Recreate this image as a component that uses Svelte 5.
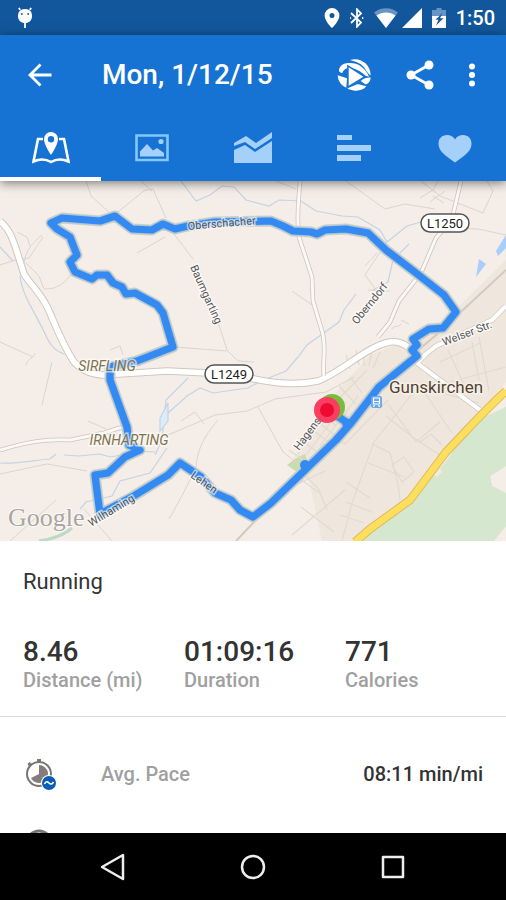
<script>
  let active = $state('Map');

  const tabs = ['Map', 'Photos', 'Charts', 'Laps', 'Heart rate'];

  const stats = [
    { value: '8.46', label: 'Distance (mi)' },
    { value: '01:09:16', label: 'Duration' },
    { value: '771', label: 'Calories' }
  ];

  const route =
    'M346 424 L351 423 L336 440 L305 470 L271 503 L253 517 L240 510 L231 500 L215 493 L201 477 L180 463 L168 475 L132 497 L100 514 L95 475 L108 473 L125 457 L140 450 L129 445 L127 427 L110 380 L110 367 L137 361 L173 347 L163 313 L157 305 L135 293 L126 294 L122 287 L113 283 L107 275 L97 275 L92 279 L75 272 L70 262 L77 255 L70 237 L57 229 L51 223 L62 218 L100 221 L115 216 L132 229 L152 230 L163 224 L175 229 L188 226 L215 222 L271 221 L283 226 L293 231 L311 232 L317 234 L325 230 L346 229 L368 233 L386 250 L416 273 L444 295 L456 312 L443 328 L429 329 L413 339 L417 345 L412 350 L417 356 L379 387 L351 423 L346 422 L330 411';
</script>

<div class="screen">
  <div class="status">
    <svg class="bug" width="16" height="22" viewBox="0 0 16 22" aria-hidden="true">
      <path d="M3 3 2 .8M13 3 14 .8M8 15v6" stroke="#fff" stroke-width="1.8" fill="none" />
      <path d="M8 2c5 0 7 3 7 7 0 4.500-3 7-7 7s-7-2.500-7-7c0-4 2-7 7-7z" fill="#fff" />
      <circle cx="4.800" cy="7" r=".9" fill="#12579b" /><circle cx="11.200" cy="7" r=".9" fill="#12579b" />
    </svg>
    <div class="system">
      <svg width="16" height="20" viewBox="0 0 16 20" aria-hidden="true"><path fill="#fff" fill-rule="evenodd" d="M8 0a7.400 7.400 0 0 1 7.400 7.400C15.400 13 8 20 8 20S.6 13 .6 7.400A7.400 7.400 0 0 1 8 0zm0 5a2.500 2.500 0 1 0 0 5 2.500 2.500 0 0 0 0-5z" /></svg>
      <svg width="14" height="20" viewBox="0 0 14 20" aria-hidden="true"><path fill="none" stroke="#fff" stroke-width="1.800" d="m1 5 10 9.500-4 4.200V1.300l4 4.200L1 15" /><path fill="#fff" d="m0 8.700 1.500 1.300L0 11.300zm12 0 2 1.300-2 1.300z" /></svg>
      <svg width="24" height="20" viewBox="0 0 24 20" aria-hidden="true"><path fill="#6794c0" d="M0 4.500C7-1.200 17-1.200 24 4.500L12 20z" /><path fill="#fff" d="M2.500 7.500C8 3.500 16 3.500 21.500 7.500L12 20z" /></svg>
      <svg width="20" height="20" viewBox="0 0 20 20" aria-hidden="true"><path fill="#fff" d="M20 0v20H0z" /></svg>
      <svg class="battery" width="14" height="20" viewBox="0 0 14 20" aria-hidden="true"><path fill="#6794c0" d="M4.500 0h5v2H14v8H0V2h4.500z" /><path fill="#fff" d="M0 8h14v12H0z" /><path fill="#12579b" d="M10.500 5 3.500 11.800h3L4 17.500l7.500-7.200H8z" /></svg>
      <span>1:50</span>
    </div>
  </div>

  <header>
    <div class="bar">
      <button aria-label="Back">
        <svg width="24" height="24" viewBox="0 0 24 24"><path d="M23.500 12H2.500M12.500 1.500 2 12l10.500 10.500" fill="none" stroke="#fff" stroke-width="2.800" /></svg>
      </button>
      <h1>Mon, 1/12/15</h1>
      <div class="actions">
        <button aria-label="Play track">
          <svg width="36" height="34" viewBox="250 173 108 102" fill="#fff">
            <path d="M292 179C325 170 354 193 354 225 348 222 343 214 337 205 328 191 313 184 292 179z" />
            <path d="M262 201C267 188 290 185 310 190 330 197 343 213 349 229L338 226C326 213 306 203 288 203 277 204 271 211 269 218 258 217 256 210 262 201z" />
            <path d="M255 225 283 234 281 262C266 257 256 243 255 225z" />
            <path d="M324 242C334 233 346 231 354 232 353 243 346 251 338 252z" />
            <path d="M284 264 314 252C325 252 334 257 341 258 334 268 320 272 307 271 297 270 289 268 284 264z" />
            <path d="M288 201 332 229 288 256z" stroke="#1673d3" stroke-width="9" paint-order="stroke" />
          </svg>
        </button>
        <button aria-label="Share">
          <svg width="28" height="30" viewBox="0 0 28 30"><path d="M23 5 5 15l18 10" fill="none" stroke="#fff" stroke-width="2.800" /><g fill="#fff"><circle cx="23" cy="5" r="4.500" /><circle cx="5" cy="15" r="4.500" /><circle cx="23" cy="25" r="4.500" /></g></svg>
        </button>
        <button aria-label="More options">
          <svg width="8" height="24" viewBox="0 0 8 24" fill="#fff"><circle cx="4" cy="3.500" r="3" /><circle cx="4" cy="12" r="3" /><circle cx="4" cy="20.500" r="3" /></svg>
        </button>
      </div>
    </div>

    <nav class="tabs" aria-label="Activity views">
      {#each tabs as tab}
        <button class:active={active === tab} aria-label={tab} onclick={() => (active = tab)}>
          {#if tab === 'Map'}
            <svg width="38" height="32" viewBox="0 0 38 32"><path d="M11 7H6L1.500 29.500C7 27 14 27 19 30c5-3 12-3 17.500-.5L32 7h-5" fill="none" stroke="currentColor" stroke-width="2.600" /><path fill="currentColor" fill-rule="evenodd" d="M19 0a7 7 0 0 1 7 7c0 6-7 16-7 16S12 13 12 7a7 7 0 0 1 7-7zm0 4a3.200 3.200 0 1 0 0 6.400A3.200 3.200 0 0 0 19 4z" /></svg>
          {:else if tab === 'Photos'}
            <svg width="34" height="28" viewBox="0 0 34 28"><path d="M1.500 1.500h31v24.500h-31z" fill="none" stroke="#82c8f9" stroke-width="2.600" /><path fill="currentColor" d="M5 22.500v-5L12 10l6 6.500 4-2.500 7 5v3.500z" /><circle cx="26" cy="7.500" r="2.600" fill="currentColor" /></svg>
          {:else if tab === 'Charts'}
            <svg width="38" height="32" viewBox="0 0 38 32" fill="currentColor"><path d="M0 31V18l11-5 10 7L38 9v22z" /><path d="M0 14V11L12 4l10 7L38 0v6L21 17 11 10z" /></svg>
          {:else if tab === 'Laps'}
            <svg width="34" height="28" viewBox="0 0 34 28" fill="currentColor"><path d="M0 1h15v5H0zM0 11h34v6H0zM0 21h24v6H0z" /></svg>
          {:else}
            <svg width="34" height="29" viewBox="0 0 34 29" fill="currentColor"><path d="M17 28.500C6 20.500.5 17 .5 9.500.5 4.500 4 1 9 1c3.500 0 6.500 1.700 8 4.500C18.500 2.700 21.500 1 25 1c5 0 8.500 3.500 8.500 8.500 0 7.500-5.500 11-16.500 19z" /></svg>
          {/if}
        </button>
      {/each}
    </nav>
  </header>

  <main>
    <svg class="map" viewBox="0 181 506 360" role="img" aria-label="Route map around Gunskirchen">
      <rect y="181" width="506" height="360" fill="#f5ede7" />
      <path fill="#efe6dd" d="M506 260 440 325 404 342 370 355 340 388 316 420 292 462 309 480 322 541H354L422 490 506 382z" />
      <path fill="#d6e7cf" d="M506 407 482 418 462 438 444 464 412 497 382 524 362 541H494L506 526V512L494 541H362L382 524 412 497 444 464 462 438 482 418 506 407V466L490 476 492 486 506 493V526L494 541H362z" />
      <path fill="#d6e7cf" d="M506 407 482 418 462 438 444 464 412 497 382 524 362 541H494L506 526V493L492 486 490 476 506 466z" />
      <path fill="#f1ebe2" d="m434 475 6-7 2 4-5 5z" />
      <path fill="#cbdbb0" d="m287 465 8-6 10-5 3 9-11 9z" />
      <path fill="#a9cdfc" d="m479 259 7 5-10 13zM506 235l-10 16 2 5 8-8z" />

      <g fill="none" stroke="#c5d3e4" stroke-width="1.200">
        <path d="m181 181 15 20 14-6 12-9 12 1 12 13 23 6 10-6 22 1 15 10 26 5 16 1 22 13 7 12 20-16 21-6" />
        <path d="M20 276c2 20 17 39 27 62 5 10 10 14 17 16M0 247l13 14M0 463c17 1 35-3 50-4l6-5m8 1 15 1 20-2 12 3 28-6 16 1M80 509l6-7 26-6 8-15 30-8 17-25" />
        <path d="M168 413l19-17 13-8 13 5 35-5 13-7 25-10 12-14 9-12 32-23 5-12 12-16M373 290l15-8 5-22 16-16M155 455l7-15 4-40 22-22" />
        <path d="m160 418 8-15 0 18-8 10z" fill="#dcebf9" />
      </g>
      <path d="M39 541c15-2 25-6 33-13" fill="none" stroke="#bed9c9" stroke-width="3" />

      <g fill="none" stroke="#dcd5ce" stroke-width="1">
        <path d="m86 181 5 15 20 18m7-2 27-22 8-1 13 29m-26-38 12 11M174 234l19 25m25 63 9 28 11 11 16 1M175 347l52 4M0 265l12-4 17-3 14-21M25 277c-3-14-1-28 17-42M17 232l10 5 3 9M26 263l13 13 5 13c10 0 17-2 27-14M137 253l28-16M0 342l33 15m-7 8c2-7 9-8 9-12M52 362l-10 43M110 350l10-4 3 9M0 474l47-10 40 7M88 421l18 8M10 541l46-41m28 9 28 32" />
        <path d="m168 435 47-20 32-4 28-12 51-7 28-15M218 420c-15 17-21 31-22 48-9 17-14 29-27 51M258 407l25 45 14 11M181 421l14-9 9 12M292 291l20 14M276 181l20 8M346 181l39 28 20-5 30 5M421 181l19 15 43 17 10-22-6-10M429 222l21 6 28 1 28 6M420 198l13-8 5-9m-5 15 11 7m1-12-15 11" />
        <path d="m388 240-23 35 15 20m-15-29 12-13m-9 37 22 1M401 320l8 4m-8 0c-2 4-8 1-9 5" />
      </g>

      <g fill="none" stroke="#e3dacf" stroke-width="1.200">
        <path d="m350 377 12 16m-23-7 17 18m-26-9 18 20m-28-5 16 16m-28 1 21 15m-30-4 18 14m-28-2 18 13m-10 14 24 17M346 355l4 14m6-19 3 15m5-15v16m8-17-3 17m11-14-7 16" />
        <path d="M367 370 326 412l-28 42m48-52-40 53m52-59-38 50M316 420l29 24 43-44M342 541l10-38 22-61 38-48M388 404l28 38 24-20m-54-6 28 22M414 438l27 18 22-22M372 444l18 9 8 31 2 16M368 463l36 14M346 482l24 16m-24 4 26 10m-32 3 24 8M392 465l12-8 10 15-12 10zM419 443l12-9 11 11M425 393l27 40m-15-41 42 11M448 350l16 35m8-43 7 38M440 362l40-19M450 382l56-15M479 337l10 54" />
        <path d="m300 471 18 17 9 22m-38-22 36-17m-24 36 33 25m-42 3 53-45" />
      </g>

      <g fill="none" stroke-linejoin="round">
        <path stroke="#cfc8bf" stroke-width="7.500" d="M0 221c13 11 15 26 24 53 9 14 19 21 26 39 8 19 13 32 24 49 8 8 15 12 28 13l65-4 63 3c25 5 55 14 88 7 24-9 49-35 72-39 16-2 21 9 31 19" />
        <path stroke="#fff" stroke-width="5.500" d="M0 221c13 11 15 26 24 53 9 14 19 21 26 39 8 19 13 32 24 49 8 8 15 12 28 13l65-4 63 3c25 5 55 14 88 7 24-9 49-35 72-39 16-2 21 9 31 19" />
        <g stroke="#cbc4bc" stroke-width="4.500"><path d="M300 181c-1 18-4 35-1 56l13 40 1 24 9 30c5 16 0 32 2 45M461 181l-9 38-16 19-15 35-22 28-9 21-12 15" /><path d="M0 450c28-8 43-11 70-10l34-7 15-5 10-1" /></g>
        <g stroke="#fbf8f5" stroke-width="3"><path d="M300 181c-1 18-4 35-1 56l13 40 1 24 9 30c5 16 0 32 2 45M461 181l-9 38-16 19-15 35-22 28-9 21-12 15" /><path d="M0 450c28-8 43-11 70-10l34-7 15-5 10-1" /></g>
        <path d="M506 270 435 336 392 372 300 474 236 541" stroke="#d2cabf" stroke-width="2" />
        <path d="m506 306-14 14-56 26-10 8-9 9 63 47" stroke="#d5cdc3" stroke-width="5.500" />
        <path d="m506 306-14 14-56 26-10 8-9 9 63 47" stroke="#fff" stroke-width="4" />
        <path d="M506 391C485 410 470 427 446 452L410 500 370 529 355 542" stroke="#dfb956" stroke-width="8.500" />
        <path d="M506 391C485 410 470 427 446 452L410 500 370 529 355 542" stroke="#fddf5f" stroke-width="6.500" />
      </g>

      <g fill="none" stroke-linejoin="round" stroke-linecap="round">
        <path d={route} stroke="#cfd0c2" stroke-width="11" />
        <path d={route} stroke="#a9c6df" stroke-width="9" />
        <path d={route} stroke="#348af0" stroke-width="7.200" />
        <circle cx="305" cy="465" r="5" fill="#348af0" />
      </g>

      <g class="place" text-anchor="middle">
        <text x="107" y="371">SIRFLING</text>
        <text x="129" y="445">IRNHARTING</text>
      </g>
      <text class="town" x="389" y="393">Gunskirchen</text>
      <g class="street">
        <text transform="translate(188 230) rotate(-5)">Oberschacher</text>
        <text transform="translate(190 267) rotate(66)">Baumgarting</text>
        <text transform="translate(357 325) rotate(-51)">Oberndorf</text>
        <text transform="translate(444 346) rotate(-21)">Welser Str.</text>
        <text transform="translate(299 451) rotate(-53)">Hagenstr.</text>
        <text transform="translate(190 477) rotate(35)">Lehen</text>
        <text transform="translate(91 527) rotate(-31)">Wilhaming</text>
      </g>
      <g class="shield" text-anchor="middle">
        <rect x="421" y="214" width="48" height="18" rx="9" /><text x="445" y="228">L1250</text>
        <rect x="205" y="365" width="48" height="18" rx="9" /><text x="229" y="379">L1249</text>
      </g>
      <rect x="371" y="396" width="11" height="12" rx="2" fill="#68a9ed" />
      <path d="M373.500 398h6v6h-6zM374.500 405l-1 2m5-2 1 2" fill="none" stroke="#fff" stroke-width="1.200" /><path d="M373 401.500h7" stroke="#fff" />
      <circle cx="332" cy="407" r="13" fill="#76bd3b" />
      <circle cx="327" cy="410" r="13" fill="#fa3e62" />
      <circle cx="327" cy="410" r="7" fill="#ed0b32" />
      <text class="google" x="8" y="526">Google</text>
    </svg>

    <section class="summary">
      <h2>Running</h2>
      <dl>
        {#each stats as stat}
          <div><dt>{stat.label}</dt><dd>{stat.value}</dd></div>
        {/each}
      </dl>
    </section>

    <ul>
      <li>
        <svg width="32" height="32" viewBox="0 0 32 32" aria-hidden="true">
          <circle cx="13" cy="16" r="12" fill="none" stroke="#7a7575" stroke-width="2" />
          <path d="M11 1h4v3h-4zM1.500 6l2-2 2.500 2-2.500 3z" fill="#7a7575" />
          <path d="M13 16V7a9 9 0 1 1-8 13z" fill="#867c7a" />
          <circle cx="23" cy="25" r="8" fill="#fff" /><circle cx="23" cy="25" r="7" fill="#0b5cb5" />
          <path d="M18.500 26c1.500-3 3-2.500 4.500-1s3 1.500 4.500-1" fill="none" stroke="#fff" stroke-width="1.600" />
        </svg>
        <span class="name">Avg. Pace</span>
        <span class="value">08:11 min/mi</span>
      </li>
      <li>
        <svg width="32" height="32" viewBox="0 0 32 32" aria-hidden="true"><circle cx="13" cy="15" r="12" fill="none" stroke="#7a7575" stroke-width="3" /></svg>
      </li>
    </ul>
  </main>

  <nav class="system-nav" aria-label="System">
    <button aria-label="System back"><svg width="28" height="28" viewBox="0 0 28 28"><path d="M24 2v24L3 14z" /></svg></button>
    <button aria-label="Home"><svg width="28" height="28" viewBox="0 0 28 28"><circle cx="14" cy="14" r="11" /></svg></button>
    <button aria-label="Recent apps"><svg width="28" height="28" viewBox="0 0 28 28"><path d="M4 4h20v20H4z" /></svg></button>
  </nav>
</div>

<style>
  .screen {
    display: flex;
    flex-direction: column;
    height: 100vh;
    font-family: Roboto, sans-serif;
    background: #fff;
    color: #333;
  }
  button {
    display: flex;
    align-items: center;
    justify-content: center;
    margin: 0;
    padding: 0;
    border: 0;
    background: none;
    color: inherit;
  }
  svg { display: block; flex: none; }
  h1, h2, dl, dd, ul { margin: 0; padding: 0; }

  .status {
    display: flex;
    flex: none;
    justify-content: space-between;
    align-items: center;
    height: 35px;
    padding: 0 11px 0 17px;
    background: #12579b;
    color: #fff;
  }
  .system { display: flex; align-items: center; gap: 10px; font-size: 20px; font-weight: 500; line-height: 24px; }
  .system svg:nth-child(4) { margin-left: -6px; }

  header {
    position: relative;
    z-index: 1;
    flex: none;
    background: #1673d3;
    color: #fff;
    box-shadow: 0 2px 10px rgba(0, 0, 0, 0.5);
  }
  .bar { display: flex; align-items: center; height: 80px; padding: 0 30px 0 28px; }
  h1 { margin-left: 50px; font-size: 28px; font-weight: 500; line-height: 36px; white-space: nowrap; }
  .actions { display: flex; align-items: center; gap: 34px; margin-left: auto; }
  .tabs { display: flex; height: 66px; }
  .tabs button { flex: 1; color: #a5d0fa; border-top: 4px solid transparent; border-bottom: 4px solid transparent; }
  .tabs button.active { color: #fff; border-bottom-color: #fff; }

  main { flex: 1; min-height: 0; overflow: hidden; }
  .map { width: 100%; height: auto; }
  .place { font-size: 14px; font-style: italic; fill: #82734f; stroke: #fff; stroke-opacity: 0.6; stroke-width: 3px; paint-order: stroke; }
  .town { font-size: 17px; fill: #514332; stroke: #f6f0e9; stroke-width: 3px; paint-order: stroke; }
  .street { font-size: 11px; fill: #555; stroke: #fff; stroke-opacity: 0.6; stroke-width: 3px; paint-order: stroke; }
  .shield { font-size: 13px; fill: #222; }
  .shield rect { fill: #fff; stroke: #555; stroke-width: 1.5px; }
  .google { font-family: "Liberation Serif", serif; font-size: 26px; fill: #aaa5a1; stroke: #fff; stroke-opacity: 0.7; stroke-width: 2px; paint-order: stroke; }

  .summary { padding: 27px 23px 24px; border-bottom: 1px solid #d9d9d9; }
  h2 { font-size: 22px; font-weight: 400; line-height: 28px; }
  dl { display: grid; grid-template-columns: repeat(3, 1fr); gap: 8px; margin-top: 40px; margin-right: -15px; }
  dl div { display: flex; flex-direction: column-reverse; }
  dt { font-size: 20px; font-weight: 500; line-height: 24px; color: #a0a0a0; white-space: nowrap; }
  dd { font-size: 28px; font-weight: 500; line-height: 32px; }

  ul { padding-top: 22px; list-style: none; }
  li { display: flex; align-items: center; height: 70px; padding: 0 23px 0 26px; font-size: 20px; font-weight: 500; }
  .name { margin-left: 43px; color: #a0a0a0; }
  .value { margin-left: auto; }

  .system-nav {
    display: flex;
    flex: none;
    justify-content: center;
    gap: 112px;
    height: 67px;
    background: #000;
  }
  .system-nav path, .system-nav circle { fill: none; stroke: #eee; stroke-width: 2.500; stroke-linejoin: round; }
</style>
